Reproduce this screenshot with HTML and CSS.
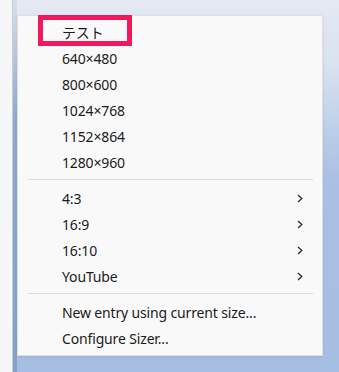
FILE: index.html
```html
<!DOCTYPE html>
<html lang="ja">
<head>
<meta charset="utf-8">
<link rel="stylesheet" href="styles.css">
</head>
<body>
<div class="desk">
  <div class="leftpane"></div>
  <div class="strip"></div>
  <div class="area">
    <div class="menu">
      <div class="mark"></div>
      <div class="item">テスト</div>
      <div class="item">640×480</div>
      <div class="item">800×600</div>
      <div class="item">1024×768</div>
      <div class="item">1152×864</div>
      <div class="item">1280×960</div>
      <div class="sep"></div>
      <div class="item sub">4:3<svg class="chev" width="6" height="9" viewBox="0 0 6 9"><path d="M1 1 L4.8 4.5 L1 8" fill="none" stroke="#2b2b2b" stroke-width="1.3"/></svg></div>
      <div class="item sub">16:9<svg class="chev" width="6" height="9" viewBox="0 0 6 9"><path d="M1 1 L4.8 4.5 L1 8" fill="none" stroke="#2b2b2b" stroke-width="1.3"/></svg></div>
      <div class="item sub">16:10<svg class="chev" width="6" height="9" viewBox="0 0 6 9"><path d="M1 1 L4.8 4.5 L1 8" fill="none" stroke="#2b2b2b" stroke-width="1.3"/></svg></div>
      <div class="item sub">YouTube<svg class="chev" width="6" height="9" viewBox="0 0 6 9"><path d="M1 1 L4.8 4.5 L1 8" fill="none" stroke="#2b2b2b" stroke-width="1.3"/></svg></div>
      <div class="sep"></div>
      <div class="item">New entry using current size...</div>
      <div class="item">Configure Sizer...</div>
    </div>
  </div>
</div>
</body>
</html>
```

FILE: styles.css
```css
html, body {
  margin: 0;
  padding: 0;
}
body {
  width: 339px;
  height: 372px;
  overflow: hidden;
  font-family: "Noto Sans", "Noto Sans CJK JP", sans-serif;
  font-size: 14px;
  letter-spacing: -0.15px;
  color: #1b1b1b;
}
.desk {
  display: flex;
  height: 372px;
  background: linear-gradient(180deg, #e4e9f3 0px, #dbe3f1 60px, #bccfea 130px, #a9c0e4 180px, #a6bee2 372px);
}
.leftpane {
  width: 12px;
  background: #f6f7f9;
  border-right: 1px solid #c9cdd3;
}
.strip {
  width: 4px;
  background: linear-gradient(180deg, #d9dee6 0px, #c2cfe2 40px, #8fa9cf 120px, #86a2cc 372px);
}
.area {
  flex: 1;
  padding-top: 15px;
}
.menu {
  position: relative;
  width: 304px;
  background: #f9f9f9;
  border: 1px solid #e0e0e0;
  padding: 3px 0 4px 0;
  box-shadow: 0 1px 3px rgba(0,0,0,0.08);
}
.item {
  height: 26px;
  display: flex;
  align-items: center;
  justify-content: space-between;
  padding: 0 19px 0 44px;
  white-space: nowrap;
}
.chev {
  display: block;
}
.sep {
  height: 1px;
  background: #dcdcdc;
  margin: 4px 9px 5px 10px;
}
.mark {
  position: absolute;
  left: 20px;
  top: -1px;
  width: 84px;
  height: 21px;
  border: 5px solid #f2185c;
}
```
